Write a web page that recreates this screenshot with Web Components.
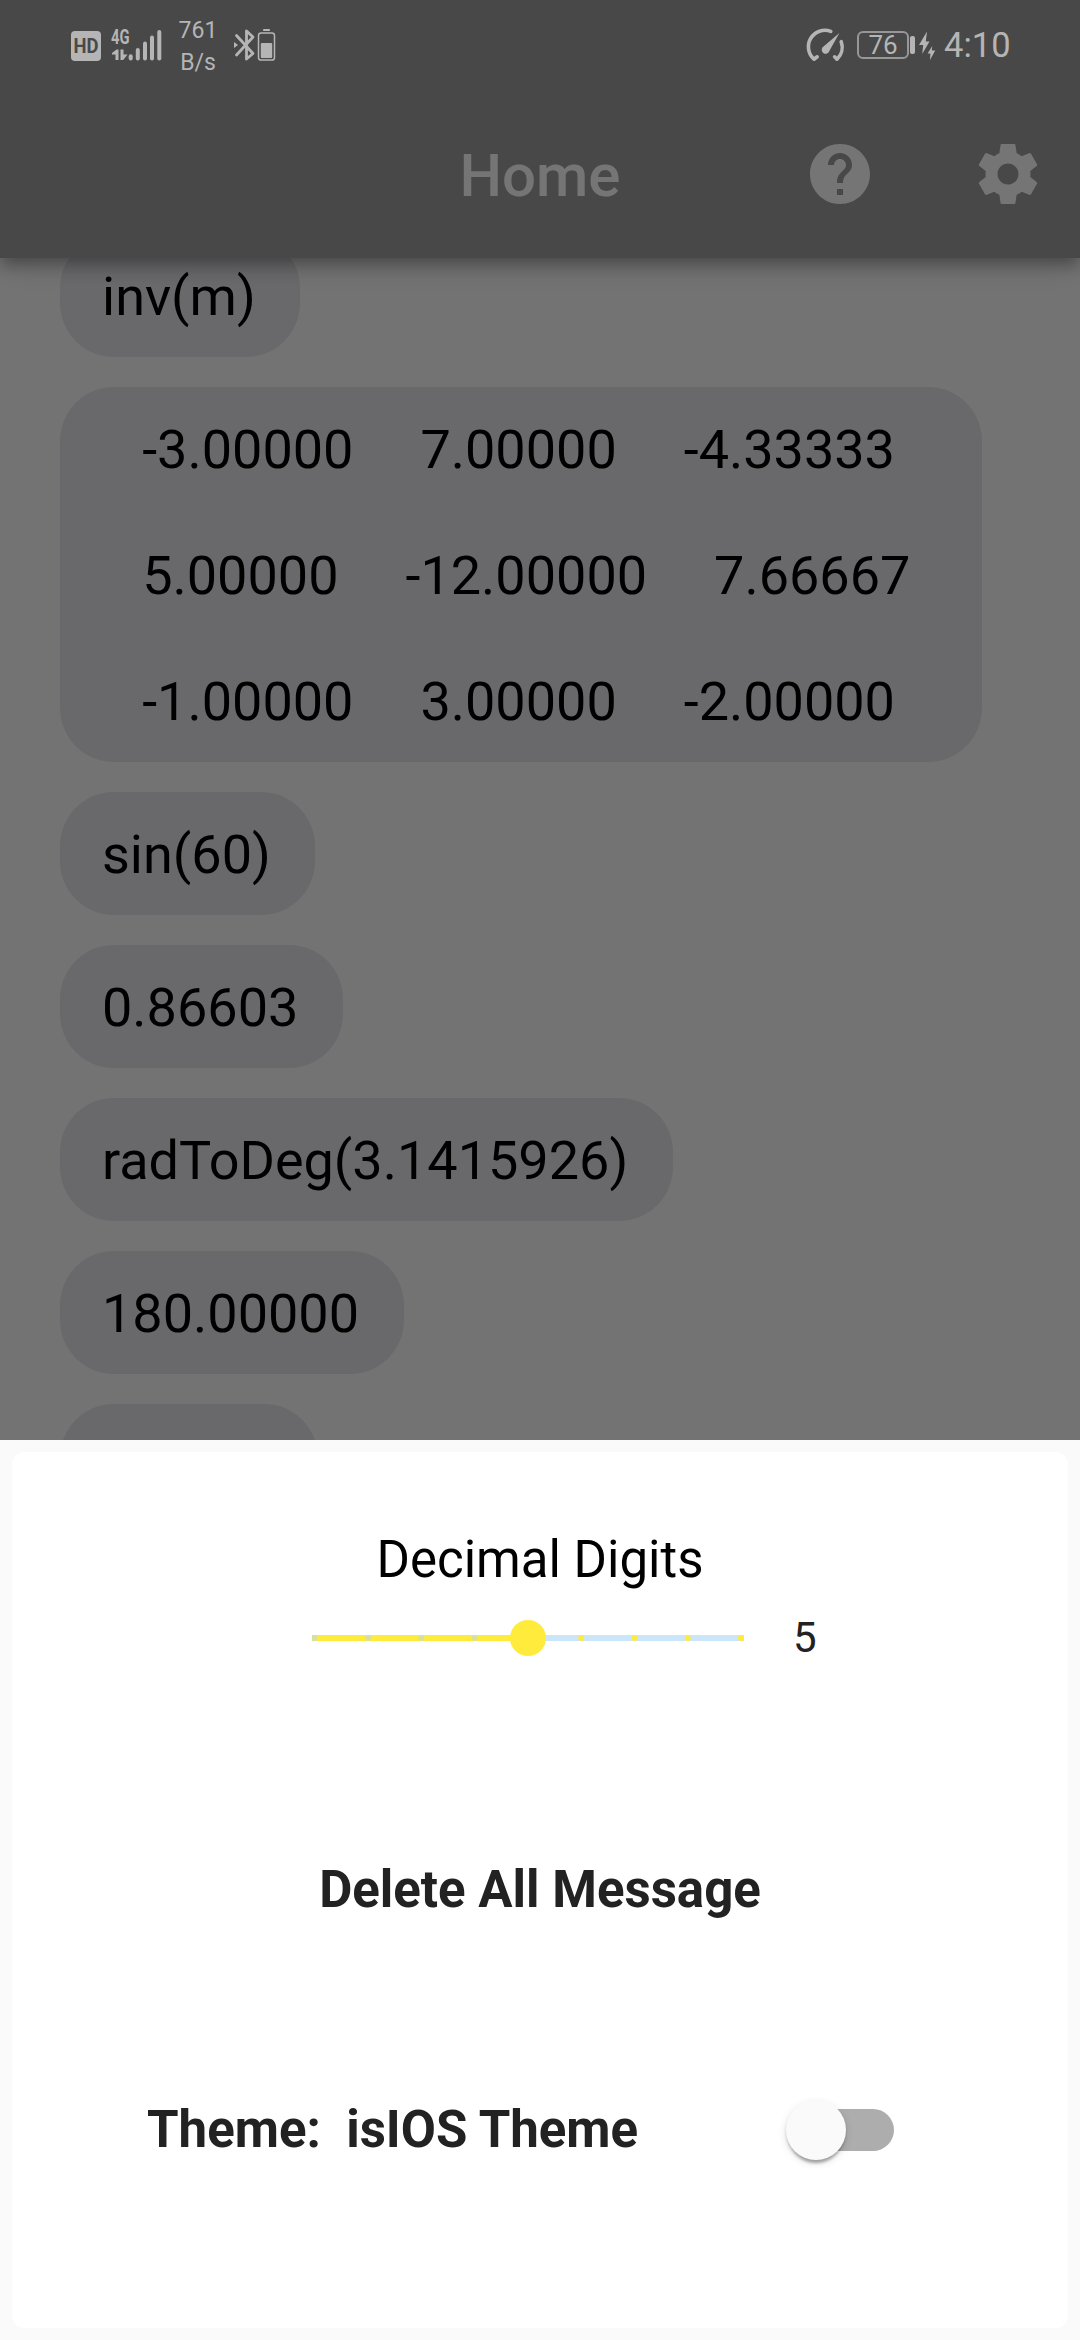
<!DOCTYPE html>
<html lang="en">
<head>
<meta charset="utf-8">
<title>Home</title>
<style>
html, body { margin: 0; padding: 0; background: #fafafa; }
body { width: 1080px; height: 2340px; overflow: hidden; font-family: Roboto, sans-serif; }
</style>
</head>
<body>
<calc-app></calc-app>
<script>
function define(name, html) {
  const tpl = document.createElement('template');
  tpl.innerHTML = html.trim();
  customElements.define(name, class extends HTMLElement {
    constructor() {
      super();
      this.attachShadow({ mode: 'open' }).appendChild(tpl.content.cloneNode(true));
    }
  });
}

define('status-bar', `
<style>
:host { display: flex; align-items: center; height: 90px; box-sizing: border-box; padding: 0 72px 0 71px; color: #b5b5b5; font-family: Roboto, sans-serif; }
svg { display: block; flex: none; fill: currentColor; overflow: visible; }
.net { margin-left: 10px; }
.rate { width: 50px; margin-left: 10px; text-align: center; font-size: 23px; line-height: 32px; padding-top: 3px; }
.bt { margin-left: 10px; }
.spacer { flex: 1; }
.bat { display: flex; align-items: center; margin-left: 11px; }
.cell { box-sizing: border-box; width: 52px; height: 28px; border: 2px solid #979797; border-radius: 6px; font-size: 26px; line-height: 25px; text-align: center; }
.nub { width: 5px; height: 18px; border-radius: 2px; background: currentColor; margin-left: 1px; }
.bolt { margin-left: 4px; }
.time { margin-left: 8px; font-size: 34.5px; line-height: 42px; width: 64px; white-space: nowrap; }
</style>
<svg width="30" height="34" viewBox="0 0 30 34"><rect x="0" y="3" width="30" height="30" rx="4"/><text x="2.6" y="24.8" font-size="19.5" font-weight="700" fill="#494949" textLength="25" lengthAdjust="spacingAndGlyphs">HD</text></svg>
<svg class="net" width="52" height="34" viewBox="0 0 52 34">
<text x="0" y="15.8" font-size="20" font-weight="700" textLength="18.5" lengthAdjust="spacingAndGlyphs">4G</text>
<path d="M1 25 L5.5 21.5 H7.5 V32 H4.5 V26.5 H1 Z M9.5 21.5 H12.5 V26.5 L16.5 26.5 L12.2 32 H9.5 Z"/>
<rect x="17.7" y="26.2" width="4" height="6.3" rx="2"/><rect x="24.8" y="20" width="4" height="12.5" rx="2"/><rect x="32" y="13.5" width="4" height="19" rx="2"/><rect x="39" y="7.5" width="4" height="25" rx="2"/><rect x="46.3" y="2" width="4" height="30.5" rx="2"/>
</svg>
<div class="rate">761<br>B/s</div>
<svg class="bt" width="44" height="34" viewBox="0 0 44 34">
<path d="M3.5 7.5 L20 25.5 L13.5 31 V3 L20 9 L3.5 27" fill="none" stroke="currentColor" stroke-width="2.8" stroke-linejoin="round" stroke-linecap="round"/>
<path d="M1 14 L5 17 L1 20 Z"/>
<rect x="30" y="1" width="7" height="2" rx=".8"/>
<rect x="25.5" y="5" width="16" height="27" rx="2.6" fill="none" stroke="currentColor" stroke-width="1.5"/>
<rect x="27.8" y="15" width="11.4" height="15" rx="1"/>
</svg>
<div class="spacer"></div>
<svg width="40" height="34" viewBox="0 0 40 34">
<path d="M11.2 28.8 L8 31.2 A16.5 16.5 0 0 1 24.8 3.400" fill="none" stroke="currentColor" stroke-width="3.6" stroke-linecap="round" stroke-linejoin="round"/>
<path d="M35.2 13.6 A16.5 16.5 0 0 1 31 31.2 L28.6 28.8" fill="none" stroke="currentColor" stroke-width="3.6" stroke-linecap="round" stroke-linejoin="round"/>
<path d="M33.4 5 L23.6 22.6 A4 4 0 1 1 17.8 18.2 Z"/>
</svg>
<div class="bat"><div class="cell">76</div><div class="nub"></div></div>
<svg class="bolt" width="17" height="34" viewBox="0 0 17 34"><path d="M8 3.5 L0 17 H4.2 L3.2 26 L10.5 13.5 H6.8 Z M13.2 18 L8.6 25.4 H11.4 L11 32 L16.2 22.6 H12.8 Z"/></svg>
<div class="time">4:10</div>
`);

define('app-bar', `
<style>
:host { display: block; position: relative; z-index: 1; height: 258px; background: #9e9e9e; box-shadow: 0 6px 12px -3px rgba(0,0,0,.2), 0 12px 15px 0 rgba(0,0,0,.14), 0 3px 30px 0 rgba(0,0,0,.12); box-sizing: border-box; padding-top: 90px; }
.bar { display: grid; grid-template-columns: 1fr auto 1fr; align-items: center; height: 168px; padding-right: 36px; padding-left: 36px; }
h1 { grid-column: 2; margin: 0; padding-top: 4px; font: 500 60px/70px Roboto, sans-serif; color: #fff; }
.actions { display: flex; justify-content: flex-end; gap: 96px; }
svg { width: 72px; height: 72px; fill: #fff; display: block; }
</style>
<div class="bar"><h1><slot></slot></h1>
<div class="actions">
<svg viewBox="0 0 24 24"><path d="M12 2C6.48 2 2 6.48 2 12s4.48 10 10 10 10-4.48 10-10S17.52 2 12 2zm1 17h-2v-2h2v2zm2.07-7.75l-.9.92C13.45 12.9 13 13.5 13 15h-2v-.5c0-1.100.45-2.100 1.170-2.830l1.240-1.260c.37-.36.59-.86.59-1.410 0-1.100-.9-2-2-2s-2 .9-2 2H8c0-2.210 1.790-4 4-4s4 1.790 4 4c0 .88-.36 1.680-.93 2.250z"/></svg>
<svg viewBox="0 0 24 24"><path d="M19.43 12.98c.04-.32.07-.64.07-.98s-.03-.66-.07-.98l2.110-1.650c.19-.15.24-.42.12-.64l-2-3.460c-.12-.22-.39-.3-.61-.22l-2.490 1c-.52-.4-1.080-.73-1.690-.98l-.38-2.650C14.460 2.180 14.250 2 14 2h-4c-.25 0-.46.18-.49.42l-.38 2.650c-.61.25-1.170.59-1.690.98l-2.490-1c-.23-.09-.49 0-.61.22l-2 3.460c-.13.22-.07.49.12.64l2.110 1.650c-.04.32-.07.65-.07.98s.03.66.07.98l-2.110 1.650c-.19.15-.24.42-.12.64l2 3.460c.12.22.39.3.61.22l2.490-1c.52.4 1.080.73 1.690.98l.38 2.650c.03.24.24.42.49.42h4c.25 0 .46-.18.49-.42l.38-2.650c.61-.25 1.170-.59 1.690-.98l2.490 1c.23.09.49 0 .61-.22l2-3.460c.12-.22.07-.49-.12-.64l-2.110-1.650zM12 15.500c-1.930 0-3.500-1.570-3.500-3.500s1.570-3.500 3.500-3.500 3.500 1.570 3.500 3.500-1.570 3.500-3.500 3.500z"/></svg>
</div></div>
`);

define('chat-bubble', `<style>
:host { display: block; flex: none; box-sizing: border-box; min-height: 123px; padding: 31px 44.500px 29px 42px; border-radius: 54px; background: #e5e5ea; color: #000; font: 400 54px/63px Roboto, sans-serif; white-space: pre; }
</style><slot></slot>`);

define('message-list', `
<style>
:host { display: flex; flex-direction: column; align-items: flex-start; gap: 30px; height: 1206px; box-sizing: border-box; padding-left: 60px; margin-top: -24px; overflow: hidden; }
</style><slot></slot>`);

define('digit-slider', `
<style>
:host { display: block; width: 432px; height: 36px; }
svg { display: block; }
</style>
<svg width="432" height="36" viewBox="0 0 432 36">
<rect x="0" y="15" width="432" height="6" fill="#cbe5fa"/>
<rect x="0" y="15" width="216" height="6" fill="#ffeb3b"/>
<g fill="#d6e09f"><rect x="0" y="15" width="5" height="6"/><circle cx="56.250" cy="18" r="3"/><circle cx="109.500" cy="18" r="3"/><circle cx="162.750" cy="18" r="3"/></g>
<g fill="#ffeb3b"><circle cx="269.250" cy="18" r="3"/><circle cx="322.500" cy="18" r="3"/><circle cx="375.750" cy="18" r="3"/><circle cx="429" cy="18" r="3"/><circle cx="216" cy="18" r="18"/></g>
</svg>`);

define('toggle-switch', `
<style>
:host { display: flex; align-items: center; width: 108px; height: 60px; }
.track { flex: 1; height: 42px; margin-left: 9px; border-radius: 21px; background: #adadad; display: flex; align-items: center; }
.thumb { width: 60px; height: 60px; margin-left: -9px; border-radius: 50%; background: #fafafa; box-shadow: 0 6px 3px -3px rgba(0,0,0,.2), 0 3px 3px 0 rgba(0,0,0,.14), 0 3px 9px 0 rgba(0,0,0,.12); }
</style>
<div class="track"><div class="thumb"></div></div>`);

define('settings-sheet', `
<style>
:host { display: block; position: relative; z-index: 3; height: 900px; box-sizing: border-box; padding: 12px; background: #fafafa; color: #222; font-family: Roboto, sans-serif; }
.card { box-sizing: border-box; height: 876px; border-radius: 12px; background: #fff; padding-top: 78px; display: flex; flex-direction: column; font-size: 51px; line-height: 60px; }
.title { color: #000; text-align: center; }
.row { display: flex; align-items: center; }
.digits { height: 96px; padding-left: 300px; }
.value { margin-left: 49px; font-size: 42px; }
.del { margin-top: 174px; text-align: center; font-weight: 700; }
.theme { margin-top: 180px; height: 60px; padding: 0 174px 0 135px; justify-content: space-between; font-weight: 700; white-space: pre; }
</style>
<div class="card">
<div class="title">Decimal Digits</div>
<div class="row digits"><digit-slider></digit-slider><span class="value">5</span></div>
<div class="del">Delete All Message</div>
<div class="row theme"><span>Theme:  isIOS Theme</span><toggle-switch></toggle-switch></div>
</div>`);

define('calc-app', `
<style>
:host { display: block; position: relative; width: 1080px; height: 2340px; overflow: hidden; }
.page { height: 1440px; overflow: hidden; }
.scrim { position: absolute; inset: 0 0 900px 0; z-index: 2; background: rgba(0,0,0,.54); }
status-bar { position: absolute; inset: 0 0 auto 0; z-index: 4; }
.partial { width: 258px; }
</style>
<div class="page">
<app-bar>Home</app-bar>
<message-list>
<chat-bubble>inv(m)</chat-bubble>
<chat-bubble>   -3.00000     7.00000     -4.33333  

   5.00000     -12.00000     7.66667  

   -1.00000     3.00000     -2.00000  </chat-bubble>
<chat-bubble>sin(60)</chat-bubble>
<chat-bubble>0.86603</chat-bubble>
<chat-bubble>radToDeg(3.1415926)</chat-bubble>
<chat-bubble>180.00000</chat-bubble>
<chat-bubble class="partial"></chat-bubble>
</message-list>
</div>
<div class="scrim"></div>
<status-bar></status-bar>
<settings-sheet></settings-sheet>
`);
</script>
</body>
</html>
